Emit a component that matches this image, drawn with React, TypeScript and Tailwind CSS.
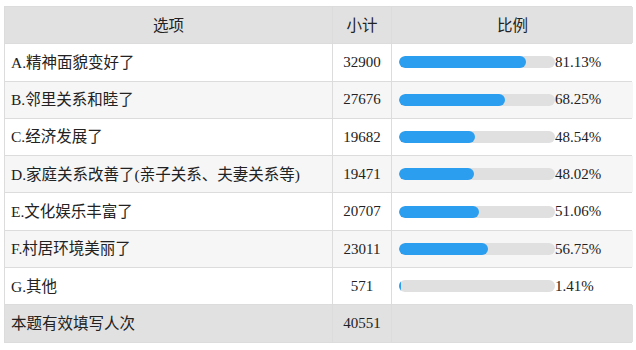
const rows = [
  { label: 'A.精神面貌变好了', count: 32900, pct: 81.13 },
  { label: 'B.邻里关系和睦了', count: 27676, pct: 68.25 },
  { label: 'C.经济发展了', count: 19682, pct: 48.54 },
  { label: 'D.家庭关系改善了(亲子关系、夫妻关系等)', count: 19471, pct: 48.02 },
  { label: 'E.文化娱乐丰富了', count: 20707, pct: 51.06 },
  { label: 'F.村居环境美丽了', count: 23011, pct: 56.75 },
  { label: 'G.其他', count: 571, pct: 1.41 },
];

const font = { fontFamily: '"Liberation Serif", "Noto Sans CJK SC", serif' };

export default function App() {
  return (
    <div className="w-[636px] h-[350px] bg-white pt-[6px] pl-[4px]" style={font}>
      <div className="w-[628px] grid grid-cols-[327px_58px_241px] auto-rows-[36.3px] gap-px p-px bg-[#dcdcdc] text-[15px] text-[#222]">
        <div className="bg-[#e1e1e1] flex items-center justify-center text-[15.5px]">选项</div>
        <div className="bg-[#e1e1e1] flex items-center justify-center text-[15.5px]">小计</div>
        <div className="bg-[#e1e1e1] flex items-center justify-center text-[15.5px]">比例</div>

        {rows.map((r, i) => {
          const bg = i % 2 === 0 ? 'bg-white' : 'bg-[#f6f6f6]';
          return [
            <div key={r.label + 'a'} className={`${bg} flex items-center pl-[6px] text-[15.5px]`}>
              {r.label}
            </div>,
            <div key={r.label + 'b'} className={`${bg} flex items-center justify-center`}>
              {r.count}
            </div>,
            <div key={r.label + 'c'} className={`${bg} flex items-center pl-[7px]`}>
              <div className="w-[156px] h-[12px] rounded-full bg-[#e0e0e0] overflow-hidden">
                <div className="h-full rounded-full bg-[#2b9ef0]" style={{ width: `${r.pct}%` }} />
              </div>
              <span>{r.pct.toFixed(2)}%</span>
            </div>,
          ];
        })}

        <div className="bg-[#e1e1e1] flex items-center pl-[6px] text-[15.5px]">本题有效填写人次</div>
        <div className="bg-[#e1e1e1] flex items-center justify-center">40551</div>
        <div className="bg-[#e1e1e1]" />
      </div>
    </div>
  );
}
